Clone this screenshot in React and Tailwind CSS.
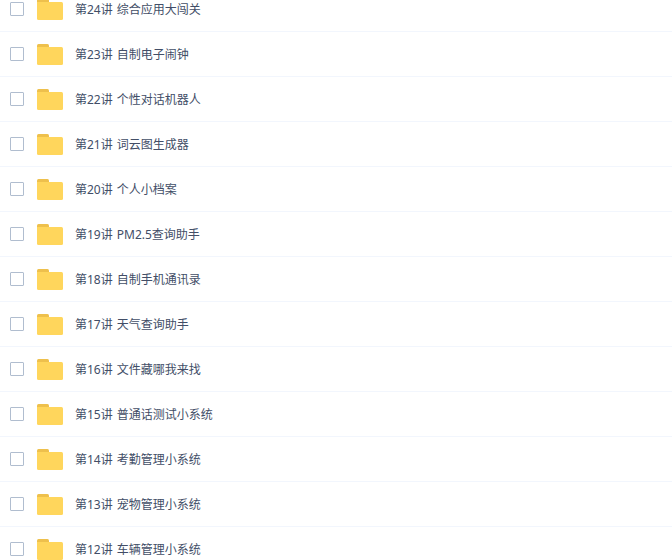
import { useState } from "react";

const FOLDERS = [
  { lesson: "第24讲", title: "综合应用大闯关" },
  { lesson: "第23讲", title: "自制电子闹钟" },
  { lesson: "第22讲", title: "个性对话机器人" },
  { lesson: "第21讲", title: "词云图生成器" },
  { lesson: "第20讲", title: "个人小档案" },
  { lesson: "第19讲", title: "PM2.5查询助手" },
  { lesson: "第18讲", title: "自制手机通讯录" },
  { lesson: "第17讲", title: "天气查询助手" },
  { lesson: "第16讲", title: "文件藏哪我来找" },
  { lesson: "第15讲", title: "普通话测试小系统" },
  { lesson: "第14讲", title: "考勤管理小系统" },
  { lesson: "第13讲", title: "宠物管理小系统" },
  { lesson: "第12讲", title: "车辆管理小系统" },
];

function FolderIcon() {
  return (
    <svg width="26" height="21" viewBox="0 0 26 21" className="shrink-0" aria-hidden="true">
      <path d="M0 6V1.5Q0 0 1.5 0H10.5Q12 0 12 1.5V6Z" fill="#eec04c" />
      <path d="M0 3H24.5Q26 3 26 4.5V19.5Q26 21 24.5 21H1.5Q0 21 0 19.5Z" fill="#ffd65c" />
    </svg>
  );
}

function FolderRow({ folder, checked, onToggle }) {
  return (
    <li className="h-[45px] border-b border-[#f2f6fd]">
      <label className="flex h-full items-center pl-[10px]">
        <input
          type="checkbox"
          checked={checked}
          onChange={onToggle}
          className="size-[14px] shrink-0 appearance-none rounded-[1px] border border-[#b0bdcf] bg-white checked:border-[#09aaff] checked:bg-[#09aaff]"
        />
        <span className="ml-[13px] flex items-center gap-3">
          <FolderIcon />
          <span className="flex gap-1 pt-0.5 whitespace-nowrap">
            <span>{folder.lesson}</span>
            <span>{folder.title}</span>
          </span>
        </span>
      </label>
    </li>
  );
}

export default function App() {
  const [selected, setSelected] = useState([]);

  const toggle = (lesson) =>
    setSelected((prev) =>
      prev.includes(lesson) ? prev.filter((l) => l !== lesson) : [...prev, lesson],
    );

  return (
    <main className="h-screen overflow-hidden bg-white font-['Noto_Sans','Noto_Sans_CJK_SC',sans-serif] text-[12px] leading-4 text-[#424e67]">
      {/* list is scrolled part-way into its first row */}
      <ul className="-mt-[13px]">
        {FOLDERS.map((folder) => (
          <FolderRow
            key={folder.lesson}
            folder={folder}
            checked={selected.includes(folder.lesson)}
            onToggle={() => toggle(folder.lesson)}
          />
        ))}
      </ul>
    </main>
  );
}
